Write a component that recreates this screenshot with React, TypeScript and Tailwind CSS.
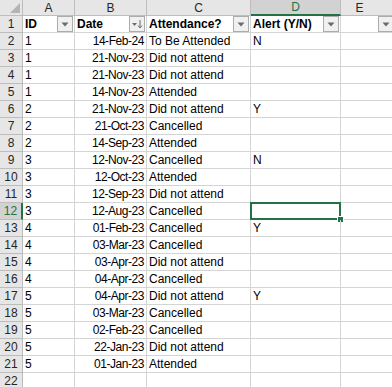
import React from "react";

const rows: [string, string, string, string][] = [
  ["1", "14-Feb-24", "To Be Attended", "N"],
  ["1", "21-Nov-23", "Did not attend", ""],
  ["1", "21-Nov-23", "Did not attend", ""],
  ["1", "14-Nov-23", "Attended", ""],
  ["2", "21-Nov-23", "Did not attend", "Y"],
  ["2", "21-Oct-23", "Cancelled", ""],
  ["2", "14-Sep-23", "Attended", ""],
  ["3", "12-Nov-23", "Cancelled", "N"],
  ["3", "12-Oct-23", "Attended", ""],
  ["3", "12-Sep-23", "Did not attend", ""],
  ["3", "12-Aug-23", "Cancelled", ""],
  ["4", "01-Feb-23", "Cancelled", "Y"],
  ["4", "03-Mar-23", "Cancelled", ""],
  ["4", "03-Apr-23", "Did not attend", ""],
  ["4", "04-Apr-23", "Cancelled", ""],
  ["5", "04-Apr-23", "Did not attend", "Y"],
  ["5", "03-Mar-23", "Cancelled", ""],
  ["5", "02-Feb-23", "Cancelled", ""],
  ["5", "22-Jan-23", "Did not attend", ""],
  ["5", "01-Jan-23", "Attended", ""],
];

const cols = "grid-cols-[23px_52px_72px_104px_90px_1fr]";

function FilterBtn({ sort }: { sort?: boolean }) {
  return (
    <div className="absolute right-[1px] top-[0px] w-[16px] h-[16px] border border-[#acacac] bg-[#f0f0f0] flex items-center justify-center">
      {sort ? (
        <svg width="12" height="10" viewBox="0 0 12 10">
          <path d="M1 4 L6 4 L3.5 7 Z" fill="#6b6b6b" />
          <path d="M9 1 L9 8.5" stroke="#6b6b6b" strokeWidth="1" />
          <path d="M7 6.5 L9 9 L11 6.5" stroke="#6b6b6b" strokeWidth="1" fill="none" />
        </svg>
      ) : (
        <svg width="8" height="5" viewBox="0 0 8 5">
          <path d="M0.5 0.5 L7.5 0.5 L4 4.5 Z" fill="#6b6b6b" />
        </svg>
      )}
    </div>
  );
}

export default function App() {
  const font = { fontFamily: "'Liberation Sans', Arial, sans-serif" };
  return (
    <div className="w-[392px] h-[387px] overflow-hidden bg-white text-[12px] text-black leading-none" style={font}>
      {/* column header */}
      <div className={`grid ${cols} h-[16px]`}>
        <div className="bg-[#e6e6e6] border-r border-b border-[#bdbdbd] relative">
          <div className="absolute right-[2px] bottom-[2px] w-0 h-0 border-l-[10px] border-l-transparent border-b-[10px] border-b-[#b4b4b4]" />
        </div>
        {["A", "B", "C"].map((c) => (
          <div key={c} className="bg-[#e6e6e6] border-r border-b border-[#bdbdbd] flex items-center justify-center text-[#262626]">
            {c}
          </div>
        ))}
        <div className="bg-[#d2d2d2] border-r border-[#bdbdbd] border-b-2 border-b-[#217346] flex items-center justify-center text-[#217346]">
          D
        </div>
        <div className="bg-[#e6e6e6] border-b border-[#bdbdbd] flex items-center justify-center text-[#262626] pr-[14px]">
          E
        </div>
      </div>
      {/* header row 1 */}
      <div className={`grid ${cols} h-[17px]`}>
        <div className="bg-[#e6e6e6] border-r border-b border-[#bdbdbd] flex items-center justify-center text-[#262626]">1</div>
        <div className="relative border-r border-b border-[#d4d4d4] font-bold flex items-center pl-[2px]">
          ID
          <FilterBtn />
        </div>
        <div className="relative border-r border-b border-[#d4d4d4] font-bold flex items-center pl-[2px]">
          Date
          <FilterBtn sort />
        </div>
        <div className="relative border-r border-b border-[#d4d4d4] font-bold flex items-center pl-[2px]">
          Attendance?
          <FilterBtn />
        </div>
        <div className="relative border-r border-b border-[#d4d4d4] font-bold flex items-center pl-[2px]">
          Alert (Y/N)
          <FilterBtn />
        </div>
        <div className="relative border-b border-[#d4d4d4]">
          <div className="absolute left-[37px] top-[0px] w-[16px] h-[16px] border border-[#acacac] bg-[#f0f0f0] flex items-center justify-center">
            <svg width="8" height="5" viewBox="0 0 8 5">
              <path d="M0.5 0.5 L7.5 0.5 L4 4.5 Z" fill="#6b6b6b" />
            </svg>
          </div>
        </div>
      </div>
      {rows.map((r, i) => {
        const n = i + 2;
        const sel = n === 12;
        return (
          <div key={n} className={`grid ${cols} h-[17px]`}>
            <div
              className={`border-b border-[#bdbdbd] flex items-center justify-center ${
                sel
                  ? "bg-[#d2d2d2] text-[#217346] border-r-2 border-r-[#217346]"
                  : "bg-[#e6e6e6] text-[#262626] border-r"
              }`}
            >
              {n}
            </div>
            <div className="border-r border-b border-[#d4d4d4] flex items-center pl-[2px]">{r[0]}</div>
            <div className="border-r border-b border-[#d4d4d4] flex items-center justify-end pr-[2px] tracking-[-0.45px]">{r[1]}</div>
            <div className="border-r border-b border-[#d4d4d4] flex items-center pl-[2px]">{r[2]}</div>
            <div className="relative border-r border-b border-[#d4d4d4] flex items-center pl-[2px]">
              {r[3]}
              {sel && (
                <div className="absolute left-[-1px] top-[-1px] right-[-1px] bottom-[-1px] border-2 border-[#217346]">
                  <div className="absolute right-[-5px] bottom-[-5px] w-[7px] h-[7px] bg-[#217346] border border-white" />
                </div>
              )}
            </div>
            <div className="border-b border-[#d4d4d4]" />
          </div>
        );
      })}
      <div className={`grid ${cols} h-[17px]`}>
        <div className="bg-[#e6e6e6] border-r border-b border-[#bdbdbd] flex items-center justify-center text-[#262626]">22</div>
        <div className="border-r border-b border-[#d4d4d4]" />
        <div className="border-r border-b border-[#d4d4d4]" />
        <div className="border-r border-b border-[#d4d4d4]" />
        <div className="border-r border-b border-[#d4d4d4]" />
        <div className="border-b border-[#d4d4d4]" />
      </div>
    </div>
  );
}
